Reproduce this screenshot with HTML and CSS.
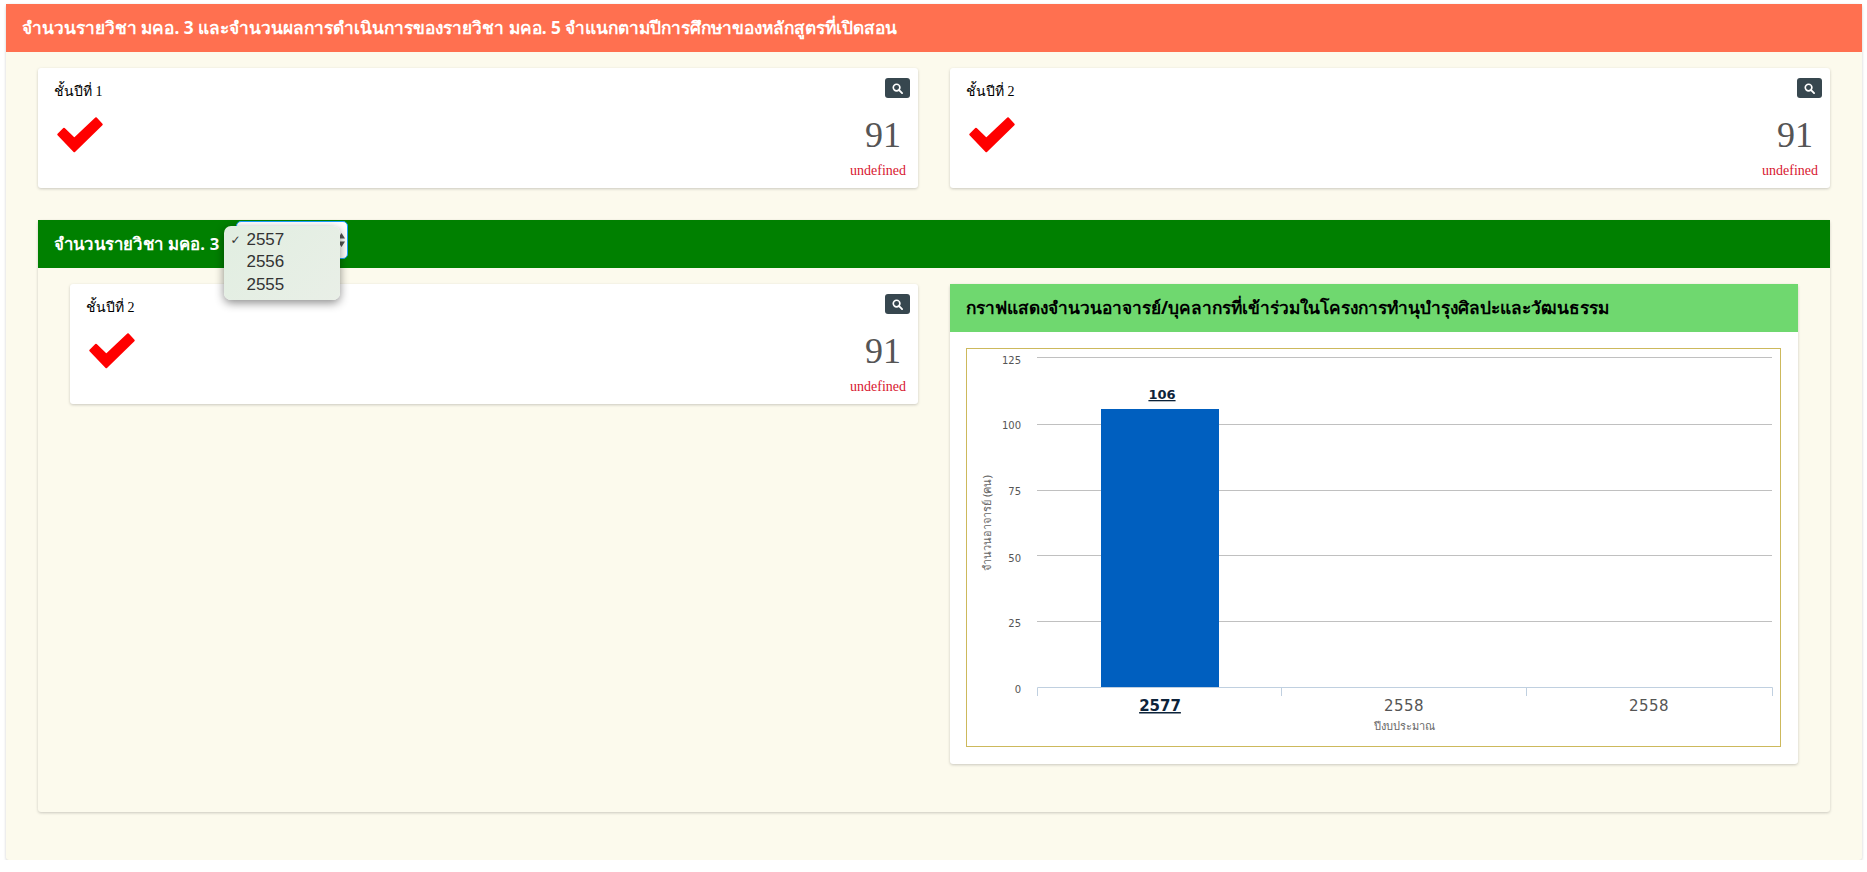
FILE: index.html
```html
<!DOCTYPE html>
<html lang="th">
  <head>
    <title>จำนวนรายวิชา มคอ. 3</title>
    <link rel="stylesheet" href="styles.css">
  </head>
  <body>
    <div class="panel outer">
      <div class="panel-head head-orange">จำนวนรายวิชา มคอ. 3 และจำนวนผลการดำเนินการของรายวิชา มคอ. 5 จำแนกตามปีการศึกษาของหลักสูตรที่เปิดสอน</div>
      <div class="outer-body">
        <div class="two-col">
          <div class="stat-card">
            <div class="stat-top">
              <span class="stat-label">ชั้นปีที่ 1</span>
              <button class="search-btn"><svg width="11" height="11" viewBox="0 0 12 12"><circle cx="5" cy="5" r="3.6" fill="none" stroke="#fff" stroke-width="1.8"/><path d="M7.8 7.8 11 11" stroke="#fff" stroke-width="2" stroke-linecap="round"/></svg></button>
            </div>
            <div class="stat-main">
              <svg class="check" width="46" height="36" viewBox="0 0 46 36"><polygon points="1.3,17.5 7,11.8 17.3,21.8 39,1.2 44.7,7.5 17.3,34.2" fill="#f00" stroke="#f00" stroke-width="2" stroke-linejoin="round"/></svg>
              <span class="stat-num">91</span>
            </div>
            <div class="stat-note">undefined</div>
          </div>
          <div class="stat-card">
            <div class="stat-top">
              <span class="stat-label">ชั้นปีที่ 2</span>
              <button class="search-btn"><svg width="11" height="11" viewBox="0 0 12 12"><circle cx="5" cy="5" r="3.6" fill="none" stroke="#fff" stroke-width="1.8"/><path d="M7.8 7.8 11 11" stroke="#fff" stroke-width="2" stroke-linecap="round"/></svg></button>
            </div>
            <div class="stat-main">
              <svg class="check" width="46" height="36" viewBox="0 0 46 36"><polygon points="1.3,17.5 7,11.8 17.3,21.8 39,1.2 44.7,7.5 17.3,34.2" fill="#f00" stroke="#f00" stroke-width="2" stroke-linejoin="round"/></svg>
              <span class="stat-num">91</span>
            </div>
            <div class="stat-note">undefined</div>
          </div>
        </div>

        <div class="panel inner">
          <div class="panel-head head-green">
            <span>จำนวนรายวิชา มคอ. 3</span>
            <div class="year-select">
              <svg class="updown" width="9" height="16" viewBox="0 0 9 16"><path d="M4.5 1 8 6.5H1zM4.5 15 1 9.5h7z" fill="#555"/></svg>
              <ul class="year-menu">
                <li class="selected">2557</li>
                <li>2556</li>
                <li>2555</li>
              </ul>
            </div>
          </div>
          <div class="inner-body two-col">
            <div class="stat-card">
              <div class="stat-top">
                <span class="stat-label">ชั้นปีที่ 2</span>
                <button class="search-btn"><svg width="11" height="11" viewBox="0 0 12 12"><circle cx="5" cy="5" r="3.6" fill="none" stroke="#fff" stroke-width="1.8"/><path d="M7.8 7.8 11 11" stroke="#fff" stroke-width="2" stroke-linecap="round"/></svg></button>
              </div>
              <div class="stat-main">
                <svg class="check" width="46" height="36" viewBox="0 0 46 36"><polygon points="1.3,17.5 7,11.8 17.3,21.8 39,1.2 44.7,7.5 17.3,34.2" fill="#f00" stroke="#f00" stroke-width="2" stroke-linejoin="round"/></svg>
                <span class="stat-num">91</span>
              </div>
              <div class="stat-note">undefined</div>
            </div>

            <div class="chart-card">
              <div class="panel-head head-lime">กราฟแสดงจำนวนอาจารย์/บุคลากรที่เข้าร่วมในโครงการทำนุบำรุงศิลปะและวัฒนธรรม</div>
              <div class="chart-wrap">
                <div class="chart-box">
                  <svg class="chart" width="813" height="397" viewBox="0 0 813 397">
                    <g stroke="#c0c0c0" stroke-width="1">
                      <path d="M70 8.5H805M70 75.5H805M70 141.5H805M70 206.5H805M70 272.5H805"/>
                    </g>
                    <rect x="134" y="60" width="118" height="278" fill="#005fbf"/>
                    <path d="M70.5 347V338.5H805.5V347M314.5 338V347M559.5 338V347" fill="none" stroke="#c0d0e0"/>
                    <g class="y-ticks">
                      <text x="54" y="15">125</text>
                      <text x="54" y="80">100</text>
                      <text x="54" y="146">75</text>
                      <text x="54" y="213">50</text>
                      <text x="54" y="278">25</text>
                      <text x="54" y="344">0</text>
                    </g>
                    <text class="bar-value" x="195" y="50">106</text>
                    <text class="x-tick active" x="193" y="362">2577</text>
                    <text class="x-tick" x="437" y="362">2558</text>
                    <text class="x-tick" x="682" y="362">2558</text>
                    <text class="axis-title" x="437" y="381">ปีงบประมาณ</text>
                    <text class="axis-title" transform="translate(24 174) rotate(-90)">จำนวนอาจารย์ (คน)</text>
                  </svg>
                </div>
              </div>
            </div>
          </div>
        </div>
      </div>
    </div>
  </body>
</html>
```

FILE: styles.css
```css
body {
  margin: 0;
  padding: 4px 5px 0 6px;
  background-color: #fff;
  font-family: "Liberation Serif", serif;
}
.panel {
  border-radius: 3px;
  background-color: #fcfaed;
  box-shadow: 0 1px 3px rgba(0, 0, 0, 0.2);
}
.panel-head {
  display: flex;
  align-items: center;
  height: 48px;
  box-sizing: border-box;
  padding-left: 16px;
  font-family: "Noto Sans", sans-serif;
  font-size: 17.3px;
  font-weight: 700;
  color: #fff;
}
.head-orange {
  background-color: #ff7050;
}
.head-green {
  background-color: #008000;
  gap: 17px;
  font-size: 16.8px;
  letter-spacing: 0.2px;
}
.head-lime {
  background-color: #6fd86f;
  color: #000;
}
.outer-body {
  padding: 16px 32px 48px;
}
.two-col {
  display: grid;
  grid-template-columns: 1fr 1fr;
  gap: 32px;
  align-items: start;
}
.inner {
  margin-top: 32px;
}
.inner-body {
  padding: 16px 32px 48px;
}
.stat-card {
  height: 120px;
  box-sizing: border-box;
  padding: 10px 8px 0 16px;
  border-radius: 3px;
  background-color: #fff;
  box-shadow: 0 1px 3px rgba(0, 0, 0, 0.2);
}
.stat-top {
  display: flex;
  justify-content: space-between;
  height: 20px;
}
.stat-label {
  padding-top: 2px;
  font-size: 14px;
  color: #000;
}
.search-btn {
  display: flex;
  align-items: center;
  justify-content: center;
  width: 25px;
  height: 20px;
  padding: 0;
  border: none;
  border-radius: 3px;
  background-color: #37474f;
}
.stat-main {
  display: flex;
  justify-content: space-between;
  padding: 19px 9px 0 3px;
}
.stat-num {
  margin-top: -3px;
  font-size: 36px;
  line-height: 42px;
  color: #555;
}
.stat-note {
  margin-top: 7px;
  padding-right: 4px;
  text-align: right;
  font-size: 14px;
  color: #d8172f;
}
.year-select {
  position: relative;
  display: flex;
  align-items: center;
  justify-content: flex-end;
  align-self: flex-start;
  width: 112px;
  height: 38px;
  box-sizing: border-box;
  margin-top: 1px;
  padding-right: 1px;
  border: 1px solid #1a9fff;
  border-radius: 5px;
  background-color: #fff;
}
.year-menu {
  position: absolute;
  top: 4px;
  left: -13px;
  width: 116px;
  height: 74px;
  box-sizing: border-box;
  margin: 0;
  padding: 3px 0 0 22px;
  list-style: none;
  letter-spacing: 0;
  border-radius: 7px;
  background: linear-gradient(135deg, #e1eee1, #e9efe7);
  box-shadow: 0 3px 10px rgba(0, 0, 0, 0.45);
  font-family: "Liberation Sans", sans-serif;
  font-size: 17px;
  font-weight: 400;
  line-height: 22.3px;
  color: #333;
}
.year-menu li {
  position: relative;
}
.year-menu .selected::before {
  content: "✓";
  position: absolute;
  left: -16px;
  font-family: "DejaVu Sans", sans-serif;
  font-size: 12px;
}
.chart-card {
  border-radius: 3px;
  background-color: #fff;
  box-shadow: 0 1px 3px rgba(0, 0, 0, 0.2);
}
.chart-wrap {
  padding: 16px 17px 17px 16px;
}
.chart-box {
  border: 1px solid #cdb95c;
}
.chart {
  display: block;
}
.y-ticks text {
  text-anchor: end;
  font-family: "DejaVu Sans", sans-serif;
  font-size: 10px;
  fill: #555;
}
.bar-value {
  text-anchor: middle;
  text-decoration: underline;
  font-family: "DejaVu Sans", sans-serif;
  font-size: 13px;
  font-weight: 700;
  fill: #0d233a;
}
.x-tick {
  text-anchor: middle;
  font-family: "DejaVu Sans", sans-serif;
  font-size: 15px;
  letter-spacing: 0.5px;
  fill: #555;
}
.x-tick.active {
  text-decoration: underline;
  font-weight: 700;
  letter-spacing: 0;
  fill: #0d233a;
}
.axis-title {
  text-anchor: middle;
  font-family: "Noto Sans", sans-serif;
  font-size: 11px;
  font-weight: 500;
  fill: #666;
}
```
